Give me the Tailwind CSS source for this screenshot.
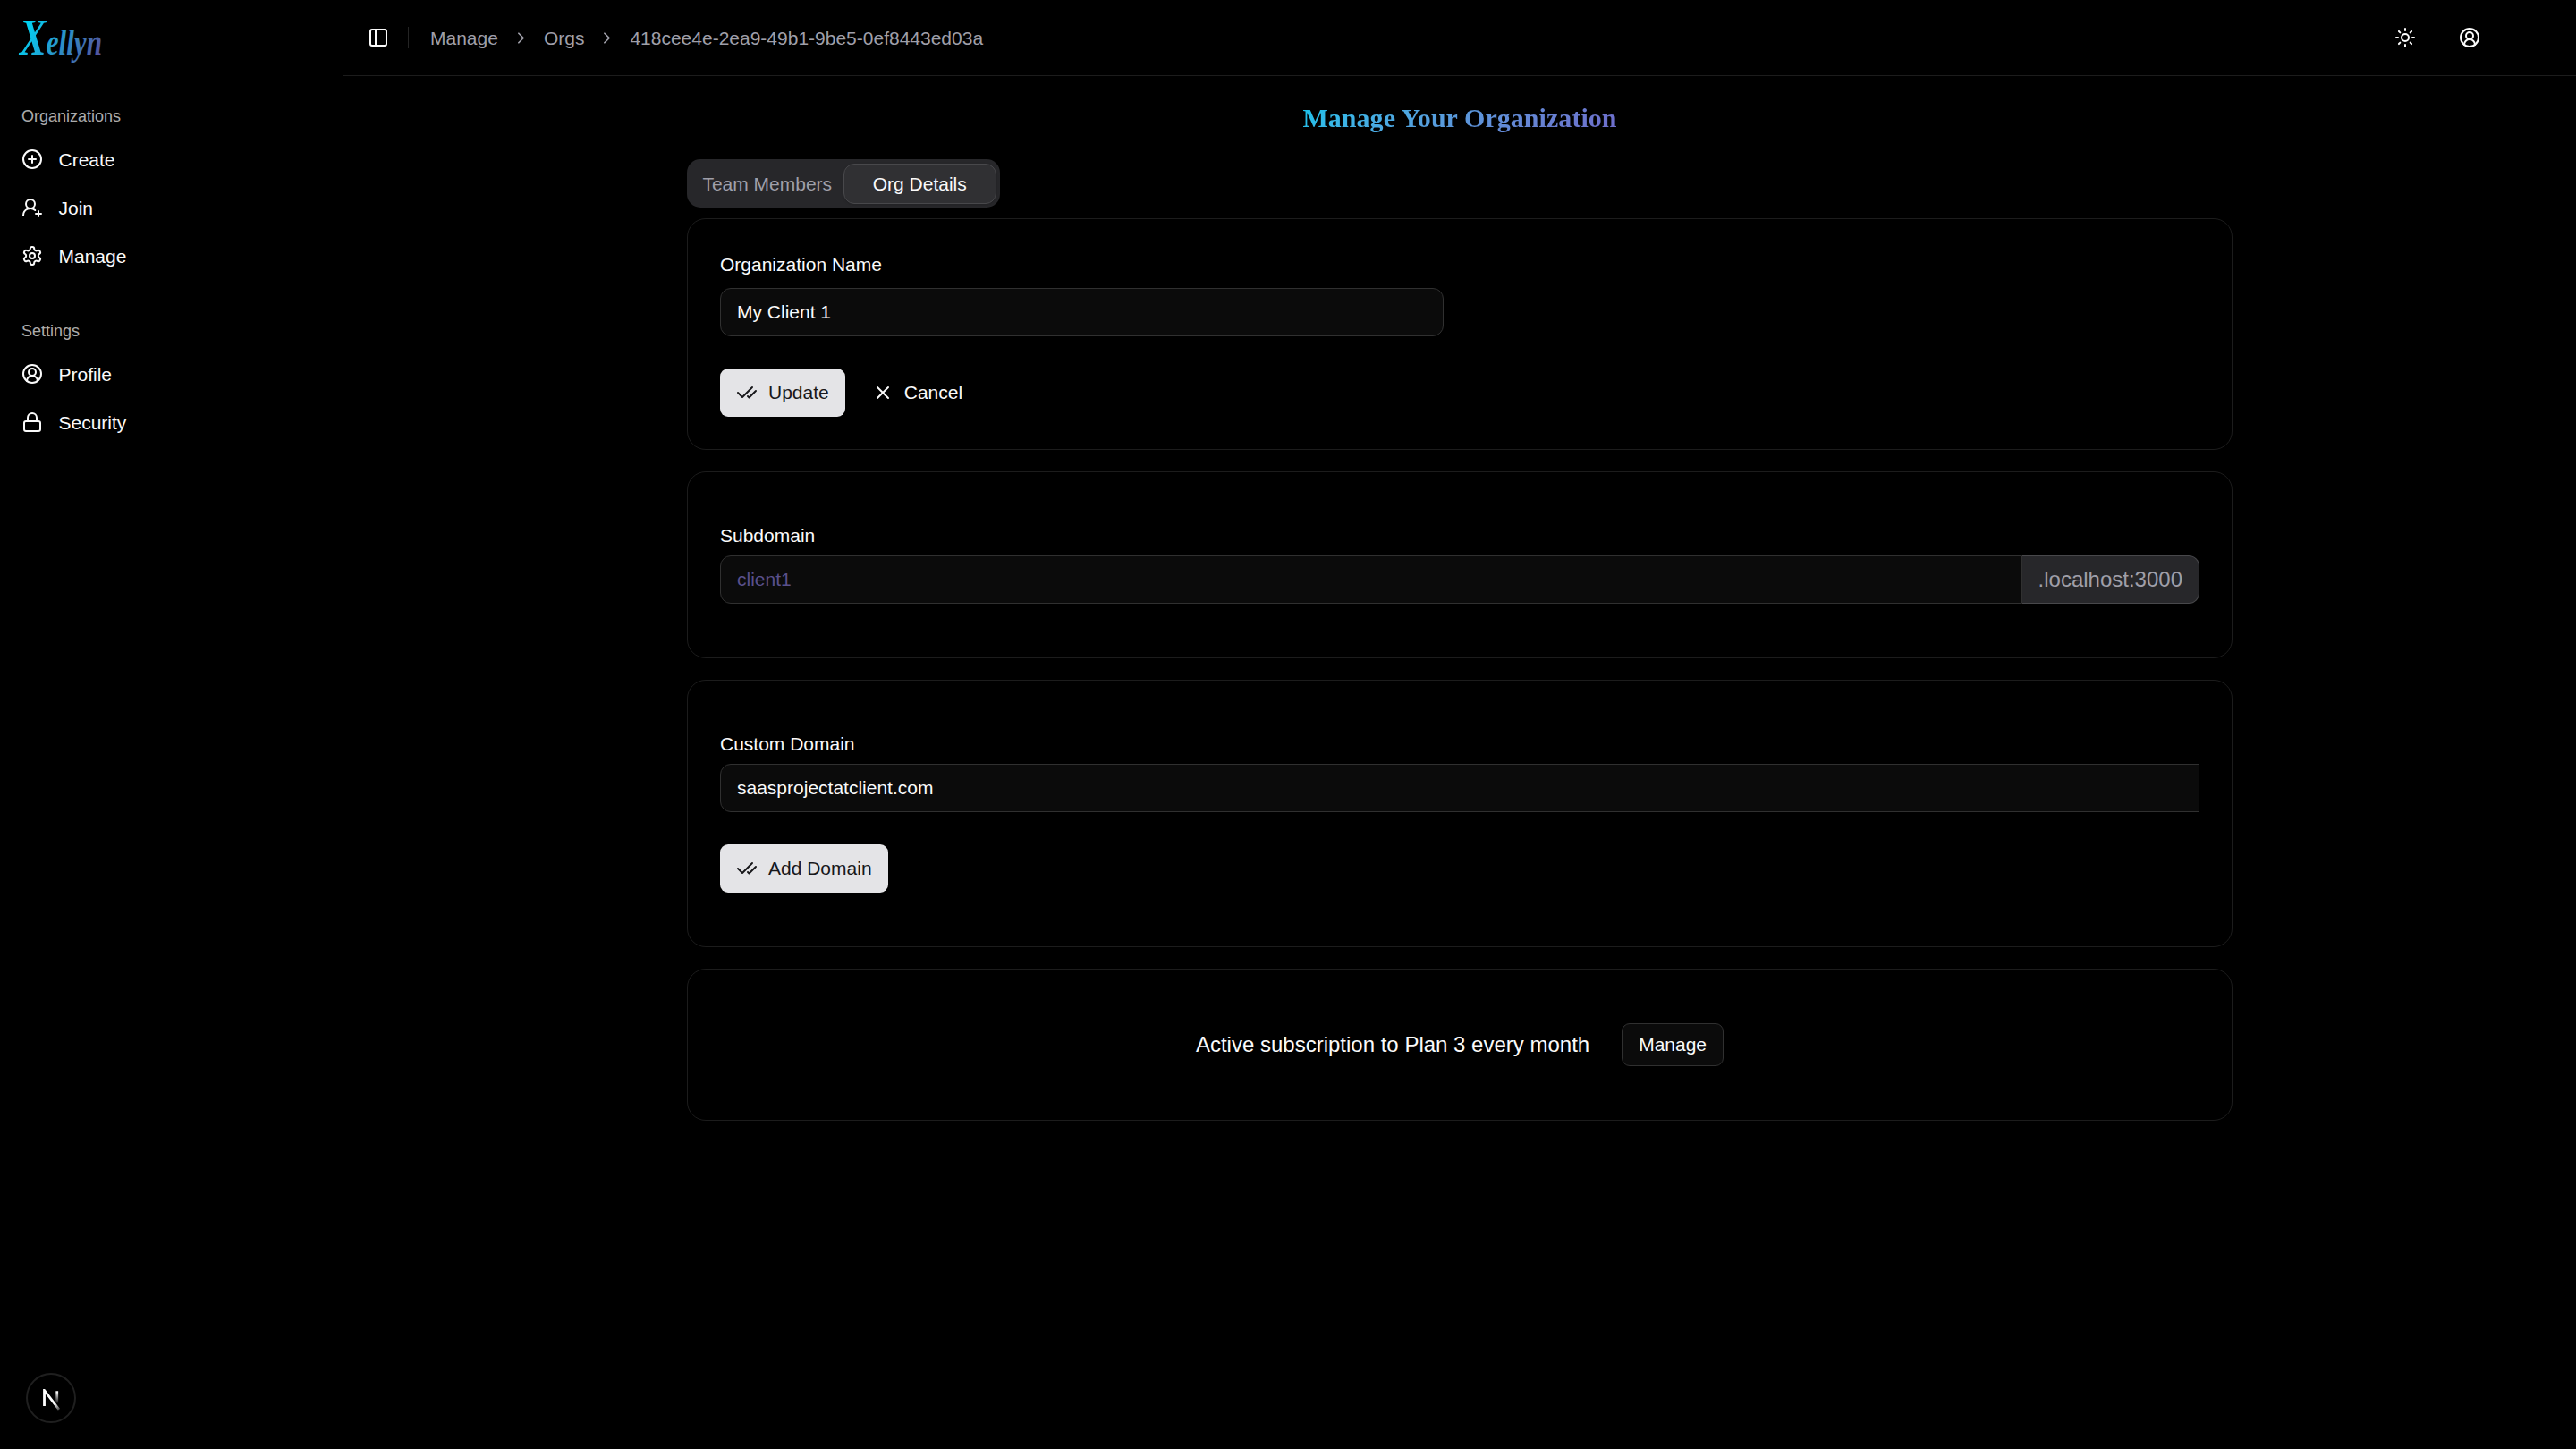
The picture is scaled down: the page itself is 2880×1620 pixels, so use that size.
<!DOCTYPE html>
<html lang="en" class="text-[24px]">
  <head>
    <meta charset="UTF-8" />
    <meta name="viewport" content="width=device-width, initial-scale=1.0" />
    <title>Xellyn - Manage Your Organization</title>
    <script src="https://cdn.jsdelivr.net/npm/@tailwindcss/browser@4"></script>
  </head>

  <body
    class="bg-black text-[#fafafa] h-screen flex overflow-hidden font-['Liberation_Sans',Arial,sans-serif]"
  >
    <!-- Sidebar -->
    <aside class="w-64 shrink-0 h-full border-r border-[#1c1c1c] flex flex-col">
      <div class="h-[94px] pt-3 pl-[22px]">
        <svg class="w-[110px] h-[64px] overflow-visible" viewBox="0 0 110 64">
          <defs>
            <linearGradient
              id="logo"
              gradientUnits="userSpaceOnUse"
              x1="8"
              y1="6"
              x2="92"
              y2="50"
            >
              <stop offset="0" stop-color="#00d4f4" />
              <stop offset="1" stop-color="#5a4a98" />
            </linearGradient>
          </defs>
          <text
            fill="url(#logo)"
            class="font-['Liberation_Serif',serif] italic font-bold"
            y="43"
            textLength="92"
            lengthAdjust="spacingAndGlyphs"
          ><tspan font-size="57">X</tspan><tspan font-size="40">ellyn</tspan></text>
        </svg>
      </div>

      <nav class="flex flex-col gap-2">
        <div class="p-2 pl-4">
          <div class="h-8 flex items-center text-xs text-[#fafafa]/70">
            Organizations
          </div>
          <ul class="flex flex-col gap-1 text-sm">
            <li class="h-8 flex items-center gap-[17.5px]">
              <svg
                class="size-4"
                viewBox="0 0 24 24"
                fill="none"
                stroke="currentColor"
                stroke-width="2"
                stroke-linecap="round"
                stroke-linejoin="round"
              >
                <circle cx="12" cy="12" r="10" />
                <path d="M8 12h8" />
                <path d="M12 8v8" />
              </svg>
              <span class="pt-px">Create</span>
            </li>
            <li class="h-8 flex items-center gap-[17.5px]">
              <svg
                class="size-4"
                viewBox="0 0 24 24"
                fill="none"
                stroke="currentColor"
                stroke-width="2"
                stroke-linecap="round"
                stroke-linejoin="round"
              >
                <path d="M2 21a8 8 0 0 1 13.292-6" />
                <circle cx="10" cy="8" r="5" />
                <path d="M19 16v6" />
                <path d="M22 19h-6" />
              </svg>
              <span class="pt-px">Join</span>
            </li>
            <li class="h-8 flex items-center gap-[17.5px]">
              <svg
                class="size-4"
                viewBox="0 0 24 24"
                fill="none"
                stroke="currentColor"
                stroke-width="2"
                stroke-linecap="round"
                stroke-linejoin="round"
              >
                <path
                  d="M12.22 2h-.44a2 2 0 0 0-2 2v.18a2 2 0 0 1-1 1.73l-.43.25a2 2 0 0 1-2 0l-.15-.08a2 2 0 0 0-2.73.73l-.22.38a2 2 0 0 0 .73 2.73l.15.1a2 2 0 0 1 1 1.72v.51a2 2 0 0 1-1 1.74l-.15.09a2 2 0 0 0-.73 2.73l.22.38a2 2 0 0 0 2.73.73l.15-.08a2 2 0 0 1 2 0l.43.25a2 2 0 0 1 1 1.73V20a2 2 0 0 0 2 2h.44a2 2 0 0 0 2-2v-.18a2 2 0 0 1 1-1.73l.43-.25a2 2 0 0 1 2 0l.15.08a2 2 0 0 0 2.73-.73l.22-.39a2 2 0 0 0-.73-2.73l-.15-.08a2 2 0 0 1-1-1.74v-.5a2 2 0 0 1 1-1.74l.15-.09a2 2 0 0 0 .73-2.73l-.22-.38a2 2 0 0 0-2.73-.73l-.15.08a2 2 0 0 1-2 0l-.43-.25a2 2 0 0 1-1-1.73V4a2 2 0 0 0-2-2z"
                />
                <circle cx="12" cy="12" r="3" />
              </svg>
              <span class="pt-px">Manage</span>
            </li>
          </ul>
        </div>

        <div class="p-2 pl-4">
          <div class="h-8 flex items-center text-xs text-[#fafafa]/70">
            Settings
          </div>
          <ul class="flex flex-col gap-1 text-sm">
            <li class="h-8 flex items-center gap-[17.5px]">
              <svg
                class="size-4"
                viewBox="0 0 24 24"
                fill="none"
                stroke="currentColor"
                stroke-width="2"
                stroke-linecap="round"
                stroke-linejoin="round"
              >
                <path d="M18 20a6 6 0 0 0-12 0" />
                <circle cx="12" cy="10" r="4" />
                <circle cx="12" cy="12" r="10" />
              </svg>
              <span class="pt-px">Profile</span>
            </li>
            <li class="h-8 flex items-center gap-[17.5px]">
              <svg
                class="size-4"
                viewBox="0 0 24 24"
                fill="none"
                stroke="currentColor"
                stroke-width="2"
                stroke-linecap="round"
                stroke-linejoin="round"
              >
                <rect width="18" height="11" x="3" y="11" rx="2" ry="2" />
                <path d="M7 11V7a5 5 0 0 1 10 0v4" />
              </svg>
              <span class="pt-px">Security</span>
            </li>
          </ul>
        </div>
      </nav>
    </aside>

    <div class="flex-1 flex flex-col">
      <!-- Top bar -->
      <header
        class="h-[85px] shrink-0 border-b border-[#1c1c1c] flex items-center justify-between pl-[18px] pr-[92px]"
      >
        <div class="flex items-center">
          <button class="size-7 flex items-center justify-center">
            <svg
              class="size-4"
              viewBox="0 0 24 24"
              fill="none"
              stroke="currentColor"
              stroke-width="2"
              stroke-linecap="round"
              stroke-linejoin="round"
            >
              <rect width="18" height="18" x="3" y="3" rx="2" />
              <path d="M9 3v18" />
            </svg>
          </button>
          <div class="w-px h-4 ml-2 mr-4 bg-[#242424]"></div>
          <nav class="flex items-center gap-2.5 text-sm text-[#9f9fa9]">
            <a class="pt-px">Manage</a>
            <svg
              class="size-3.5"
              viewBox="0 0 24 24"
              fill="none"
              stroke="currentColor"
              stroke-width="2"
              stroke-linecap="round"
              stroke-linejoin="round"
            >
              <path d="m9 18 6-6-6-6" />
            </svg>
            <a class="pt-px">Orgs</a>
            <svg
              class="size-3.5"
              viewBox="0 0 24 24"
              fill="none"
              stroke="currentColor"
              stroke-width="2"
              stroke-linecap="round"
              stroke-linejoin="round"
            >
              <path d="m9 18 6-6-6-6" />
            </svg>
            <a class="pt-px">418cee4e-2ea9-49b1-9be5-0ef8443ed03a</a>
          </nav>
        </div>
        <div class="flex items-center gap-3">
          <button class="size-9 flex items-center justify-center">
            <svg
              class="size-4"
              viewBox="0 0 24 24"
              fill="none"
              stroke="currentColor"
              stroke-width="2"
              stroke-linecap="round"
              stroke-linejoin="round"
            >
              <circle cx="12" cy="12" r="4" />
              <path d="M12 2v2" />
              <path d="M12 20v2" />
              <path d="m4.93 4.93 1.41 1.41" />
              <path d="m17.66 17.66 1.41 1.41" />
              <path d="M2 12h2" />
              <path d="M20 12h2" />
              <path d="m6.34 17.66-1.41 1.41" />
              <path d="m19.07 4.93-1.41 1.41" />
            </svg>
          </button>
          <button class="size-9 flex items-center justify-center">
            <svg
              class="size-4"
              viewBox="0 0 24 24"
              fill="none"
              stroke="currentColor"
              stroke-width="2"
              stroke-linecap="round"
              stroke-linejoin="round"
            >
              <path d="M18 20a6 6 0 0 0-12 0" />
              <circle cx="12" cy="10" r="4" />
              <circle cx="12" cy="12" r="10" />
            </svg>
          </button>
        </div>
      </header>

      <main class="w-[1728px] mx-auto pt-[26px] flex flex-col">
        <h1
          class="self-center text-xl leading-[42px] tracking-[0.05px] font-bold font-['Liberation_Serif',serif] text-transparent bg-clip-text bg-linear-135 from-[#06c4ec] to-[#6e6aca]"
        >
          Manage Your Organization
        </h1>

        <div
          class="mt-[25px] self-start w-[350px] h-9 p-[4.5px] grid grid-cols-2 rounded-[15px] bg-[#27272a] text-sm"
        >
          <button class="pt-px flex items-center justify-center text-[#9f9fa9]">
            Team Members
          </button>
          <button
            class="pt-px flex items-center justify-center rounded-[12px] border border-[#48484b] bg-[#303033] shadow-sm"
          >
            Org Details
          </button>
        </div>

        <div class="mt-2 flex flex-col gap-4">
          <!-- Organization name -->
          <section class="p-6 rounded-[21px] border border-[#1c1c1c] text-sm">
            <div class="grid grid-cols-2 gap-6">
              <div class="flex flex-col gap-2">
                <label class="h-[29px] leading-[29px]">Organization Name</label>
                <input
                  type="text"
                  value="My Client 1"
                  class="h-9 px-3 rounded-[12px] border border-[#303030] bg-[#0b0b0b]"
                />
              </div>
            </div>
            <div class="mt-6 flex gap-2">
              <button
                class="h-9 px-3 flex items-center gap-2 rounded-[9px] bg-[#e4e4e7] text-[#18181b]"
              >
                <svg
                  class="size-4"
                  viewBox="0 0 24 24"
                  fill="none"
                  stroke="currentColor"
                  stroke-width="2"
                  stroke-linecap="round"
                  stroke-linejoin="round"
                >
                  <path d="M18 6 7 17l-5-5" />
                  <path d="m22 10-7.5 7.5L13 16" />
                </svg>
                Update
              </button>
              <button class="h-9 px-3 flex items-center gap-2">
                <svg
                  class="size-4"
                  viewBox="0 0 24 24"
                  fill="none"
                  stroke="currentColor"
                  stroke-width="2"
                  stroke-linecap="round"
                  stroke-linejoin="round"
                >
                  <path d="M18 6 6 18" />
                  <path d="m6 6 12 12" />
                </svg>
                Cancel
              </button>
            </div>
          </section>

          <!-- Subdomain -->
          <section
            class="px-6 py-10 rounded-[21px] border border-[#1c1c1c] text-sm flex flex-col gap-2"
          >
            <label class="leading-none">Subdomain</label>
            <div class="flex">
              <input
                type="text"
                value="client1"
                class="flex-1 h-9 px-3 rounded-l-[12px] border border-[#303030] bg-[#0b0b0b] text-[#5a508c]"
              />
              <span
                class="h-9 px-3 flex items-center rounded-r-[12px] border border-l-0 border-[#48484b] bg-[#27272a] text-base text-[#9f9fa9]"
                >.localhost:3000</span
              >
            </div>
          </section>

          <!-- Custom domain -->
          <section
            class="px-6 py-10 rounded-[21px] border border-[#1c1c1c] text-sm flex flex-col"
          >
            <label class="leading-none">Custom Domain</label>
            <input
              type="text"
              value="saasprojectatclient.com"
              class="mt-2 h-9 px-3 rounded-l-[12px] border border-[#303030] bg-[#0b0b0b]"
            />
            <button
              class="mt-6 self-start h-9 px-3 flex items-center gap-2 rounded-[9px] bg-[#e4e4e7] text-[#18181b]"
            >
              <svg
                class="size-4"
                viewBox="0 0 24 24"
                fill="none"
                stroke="currentColor"
                stroke-width="2"
                stroke-linecap="round"
                stroke-linejoin="round"
              >
                <path d="M18 6 7 17l-5-5" />
                <path d="m22 10-7.5 7.5L13 16" />
              </svg>
              Add Domain
            </button>
          </section>

          <!-- Subscription -->
          <section
            class="py-10 rounded-[21px] border border-[#1c1c1c] flex items-center justify-center gap-6"
          >
            <p>Active subscription to Plan 3 every month</p>
            <button
              class="h-8 px-3 text-sm rounded-[9px] border border-[#303030] bg-[#0b0b0b]"
            >
              Manage
            </button>
          </section>
        </div>
      </main>
    </div>

    <!-- Dev tools badge, floats over the page -->
    <div
      class="fixed left-[29px] bottom-[29px] size-[56px] rounded-full border-2 border-[#1f1f1f] bg-black"
    >
      <svg
        class="absolute left-[15px] top-[16px] w-[24px] h-[24px]"
        viewBox="0 0 16 16"
        fill="none"
      >
        <defs>
          <linearGradient
            id="diag"
            gradientUnits="userSpaceOnUse"
            x1="9.95"
            y1="11.1"
            x2="14.5"
            y2="17"
          >
            <stop stop-color="white" />
            <stop offset="1" stop-color="white" stop-opacity="0" />
          </linearGradient>
          <linearGradient
            id="stem"
            gradientUnits="userSpaceOnUse"
            x1="11.8"
            y1="2"
            x2="11.8"
            y2="11"
          >
            <stop stop-color="white" />
            <stop offset="1" stop-color="white" stop-opacity="0" />
          </linearGradient>
        </defs>
        <path
          d="M13.3 15.2 L2.34 1 V12.6"
          stroke="url(#diag)"
          stroke-width="1.86"
        />
        <path d="M11.825 1.5 V13.1" stroke="url(#stem)" stroke-width="1.86" />
      </svg>
    </div>
  </body>
</html>
